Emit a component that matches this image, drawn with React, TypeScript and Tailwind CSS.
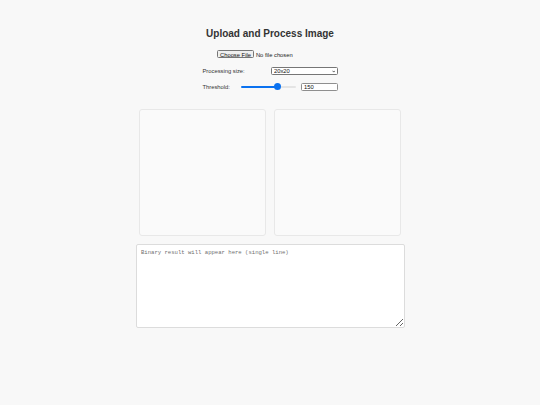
import React, { useState } from "react";

export default function App() {
  const [size, setSize] = useState("20x20");
  const [threshold, setThreshold] = useState(150);
  const max = 216;
  const fill = `${(threshold / max) * 100}%`;

  return (
    <div className="min-h-screen w-full bg-[#f8f8f8] font-['Liberation_Sans',Arial,sans-serif] text-[#333] flex flex-col items-center pt-[28px]">
      <h1 className="text-[10px] leading-[12px] font-bold text-[#333]">Upload and Process Image</h1>

      <input
        type="file"
        className="block mt-[10px] w-[107px] h-[8px] text-[5.8px] leading-[8px] text-[#222] file:h-[8px] file:px-[2.5px] file:py-0 file:border file:border-solid file:border-[#767676] file:rounded-[1.5px] file:bg-[#efefef] file:text-[#111] file:mr-[1.5px]"
      />

      <div className="mt-[9px] w-[135px] flex items-center justify-between">
        <label className="text-[5.8px] leading-[8px] text-[#333]">Processing size:</label>
        <div className="relative flex w-[67px] h-[8px]">
          <select
            value={size}
            onChange={(e) => setSize(e.target.value)}
            className="block appearance-none w-full h-full border border-solid border-[#767676] rounded-[1.5px] bg-white text-[5.8px] leading-[6px] pl-[2.5px] py-0 text-[#111]"
          >
            <option>10x10</option>
            <option>20x20</option>
            <option>32x32</option>
            <option>64x64</option>
          </select>
          <svg
            viewBox="0 0 10 10"
            className="absolute right-[2.5px] top-[2.6px] w-[3.5px] h-[3px] pointer-events-none"
          >
            <path d="M1 2.5 L5 7 L9 2.5" fill="none" stroke="#111" strokeWidth="2.2" />
          </svg>
        </div>
      </div>

      <div className="mt-[7.5px] w-[135px] flex items-center justify-between">
        <label className="text-[5.8px] leading-[8px] text-[#333]">Threshold:</label>
        <div className="flex items-center gap-[5px]">
          <input
            type="range"
            min={0}
            max={max}
            value={threshold}
            onChange={(e) => setThreshold(Number(e.target.value))}
            style={{ ["--fill" as string]: fill } as React.CSSProperties}
            className="block appearance-none w-[55px] h-[7px] bg-transparent [&::-webkit-slider-runnable-track]:h-[2.5px] [&::-webkit-slider-runnable-track]:rounded-full [&::-webkit-slider-runnable-track]:bg-[linear-gradient(to_right,#0b72f0_var(--fill),#e4e4e4_var(--fill))] [&::-webkit-slider-thumb]:appearance-none [&::-webkit-slider-thumb]:w-[7px] [&::-webkit-slider-thumb]:h-[7px] [&::-webkit-slider-thumb]:rounded-full [&::-webkit-slider-thumb]:bg-[#0b72f0] [&::-webkit-slider-thumb]:mt-[-2.25px]"
          />
          <input
            type="number"
            value={threshold}
            onChange={(e) => setThreshold(Number(e.target.value))}
            className="block w-[37px] h-[8.5px] border border-solid border-[#8f8f8f] rounded-[1.5px] bg-white text-[5.8px] leading-[6px] px-[2.5px] text-[#111] [appearance:textfield] [&::-webkit-inner-spin-button]:appearance-none"
          />
        </div>
      </div>

      <div className="mt-[18px] flex gap-[8.5px]">
        <div className="w-[126.5px] h-[126.5px] border border-solid border-[#e8e8e8] rounded-[3px] bg-[#fafafa]" />
        <div className="w-[126.5px] h-[126.5px] border border-solid border-[#e8e8e8] rounded-[3px] bg-[#fafafa]" />
      </div>

      <textarea
        placeholder="Binary result will appear here (single line)"
        className="block mt-[8.5px] w-[269px] h-[84px] border border-solid border-[#dcdcdc] rounded-[2px] bg-white px-[4.5px] py-[4px] text-[5.6px] leading-[7px] font-['Liberation_Mono','DejaVu_Sans_Mono',monospace] text-[#222] placeholder:text-[#6f6f6f]"
      />
    </div>
  );
}
